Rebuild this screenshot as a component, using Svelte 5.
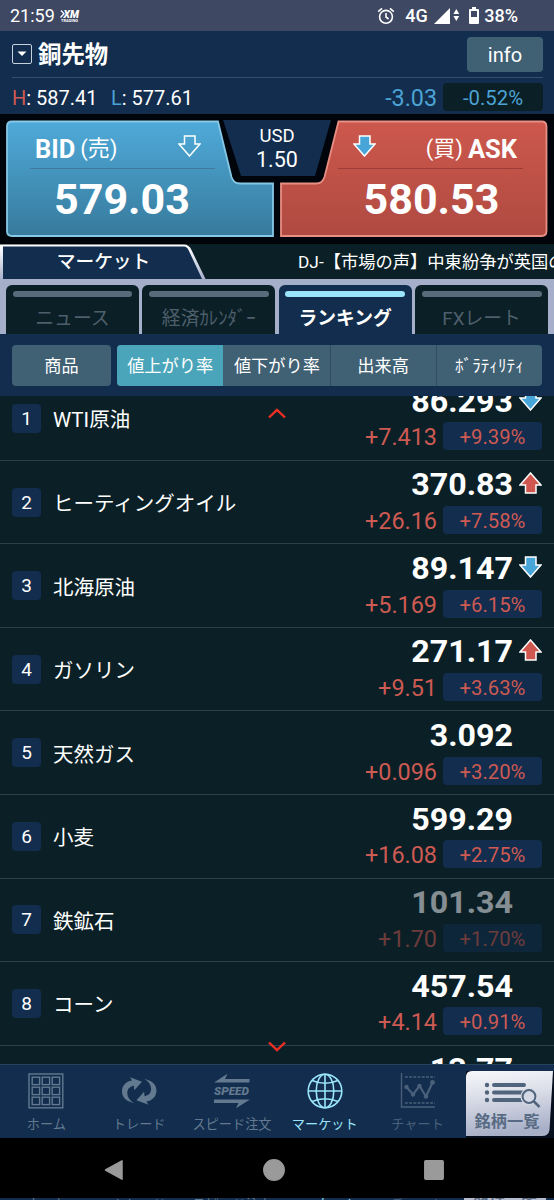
<script lang="ts">
  type Dir = "up" | "down" | "hollow" | "none";

  type Quote = {
    rank: number;
    name: string;
    price: string;
    diff: string;
    rate: string;
    dir: Dir;
    closed?: boolean;
  };

  const quotes: Quote[] = [
    { rank: 1, name: "WTI原油", price: "86.293", diff: "+7.413", rate: "+9.39%", dir: "down" },
    { rank: 2, name: "ヒーティングオイル", price: "370.83", diff: "+26.16", rate: "+7.58%", dir: "up" },
    { rank: 3, name: "北海原油", price: "89.147", diff: "+5.169", rate: "+6.15%", dir: "down" },
    { rank: 4, name: "ガソリン", price: "271.17", diff: "+9.51", rate: "+3.63%", dir: "up" },
    { rank: 5, name: "天然ガス", price: "3.092", diff: "+0.096", rate: "+3.20%", dir: "none" },
    { rank: 6, name: "小麦", price: "599.29", diff: "+16.08", rate: "+2.75%", dir: "none" },
    { rank: 7, name: "鉄鉱石", price: "101.34", diff: "+1.70", rate: "+1.70%", dir: "none", closed: true },
    { rank: 8, name: "コーン", price: "457.54", diff: "+4.14", rate: "+0.91%", dir: "none" }
  ];

  // next row, only its price peeks in above the navigation
  const nextPrice = "13.77";

  const tabs = ["ニュース", "経済ｶﾚﾝﾀﾞｰ", "ランキング", "FXレート"];
  const sorts = ["値上がり率", "値下がり率", "出来高", "ﾎﾞﾗﾃｨﾘﾃｨ"];
  const navItems = ["ホーム", "トレード", "スピード注文", "マーケット", "チャート"];

  let activeTab = $state(2);
  let activeSort = $state(0);
  let activeNav = $state(3);

  const gridCells = [4.2, 14.2, 24.2];
  const loopPath =
    "M13 30 C5 28.5 1 24 1 18.5 C1 13.5 3.5 10 8.5 8 L11 7.5 L9 4.3 L21 8.7 L13.3 17.3 L12.8 12.8 C8.5 13.5 6.3 16.5 6.3 20 C6.3 24 8.5 27.5 13 30 Z";
</script>

{#snippet arrow(dir: Dir)}
  <svg class="arrow {dir}" width="23" height="22" viewBox="0 0 23 22">
    {#if dir === "up"}
      <path d="M11.5 1 L22 13 H17 V21 H6.5 V13 H1 Z" />
    {:else if dir !== "none"}
      <path d="M6.5 1 H17 V9 H22 L11.5 21 L1 9 H6.5 Z" />
    {/if}
  </svg>
{/snippet}

<div class="screen">
  <div class="status">
    <span class="time">21:59</span>
    <svg class="xm" width="21" height="14" viewBox="0 0 21 14">
      <path d="M1 1.5 L4 4.8 L0.5 8.5" fill="none" stroke="#fff" stroke-width="1.3" />
      <text x="3.5" y="8.8" textLength="15.5" lengthAdjust="spacingAndGlyphs" class="xmBig">XM</text>
      <text x="1" y="12.8" textLength="17" lengthAdjust="spacingAndGlyphs" class="xmSmall">TRADING</text>
    </svg>
    <svg class="alarm" width="18" height="18" viewBox="0 0 18 18" fill="none" stroke="#fff" stroke-width="1.6">
      <circle cx="9" cy="9.8" r="6.4" />
      <path d="M9 6 V10 L11.6 12 M1.2 4.6 L5 1.3 M16.8 4.6 L13 1.3" />
    </svg>
    <span class="net">4G</span>
    <svg class="signal" width="27" height="16" viewBox="0 0 27 16" fill="#fff">
      <path d="M0 16 L16 0 V16 Z" />
      <path d="M22.3 1 L25.2 6 H19.4 Z M22.3 13 L25.2 8 H19.4 Z" />
    </svg>
    <svg class="battery" width="10" height="17" viewBox="0 0 10 17">
      <path d="M3 0 H7 V2 H9 Q10 2 10 3 V16 Q10 17 9 17 H1 Q0 17 0 16 V3 Q0 2 1 2 H3 Z" fill="#fff" />
      <path d="M2 4 H8 V10 H2 Z" fill="#3e4862" />
    </svg>
    <span class="pct">38%</span>
  </div>

  <header class="head">
    <div class="titleRow">
      <span class="picker">
        <svg width="10" height="6" viewBox="0 0 10 6"><path d="M0.5 0.5 H9.5 L5 5 Z" fill="#fff" /></svg>
      </span>
      <h1>銅先物</h1>
      <button class="info">info</button>
    </div>
    <div class="hlRow">
      <span class="high"><b>H</b>: 587.41</span>
      <span class="low"><b>L</b>: 577.61</span>
      <span class="change">-3.03</span>
      <span class="changeRate">-0.52%</span>
    </div>
  </header>

  <section class="deal">
    <svg class="dealShape" width="554" height="130" viewBox="0 0 554 130">
      <defs>
        <linearGradient id="bidFill" x1="0" y1="0" x2="0" y2="1">
          <stop offset="0" stop-color="#4faad9" />
          <stop offset="1" stop-color="#377a9c" />
        </linearGradient>
        <linearGradient id="askFill" x1="0" y1="0" x2="0" y2="1">
          <stop offset="0" stop-color="#cd584d" />
          <stop offset="1" stop-color="#af4a41" />
        </linearGradient>
      </defs>
      <path d="M223 6 H331 L315 62 H241 Z" fill="#122d4d" />
      <path
        d="M12 7.5 H218 L231.5 63 Q233.5 69.5 240 69.5 H273 V122 H12 Q7 122 7 117 V12.5 Q7 7.5 12 7.5 Z"
        fill="url(#bidFill)" stroke="#86c8e6" stroke-width="1.8"
      />
      <path
        d="M338.5 7.5 H541.5 Q546.5 7.5 546.5 12.5 V117 Q546.5 122 541.5 122 H281 V69.5 H316 Q322.5 69.5 324.5 63 Z"
        fill="url(#askFill)" stroke="#e78f84" stroke-width="1.8"
      />
    </svg>
    <div class="side bid">
      <div class="sideHead"><strong>BID</strong><span>(売)</span>{@render arrow("hollow")}</div>
      <div class="sidePrice">579.03</div>
    </div>
    <div class="spread"><span>USD</span><span class="spreadVal">1.50</span></div>
    <div class="side ask">
      <div class="sideHead">{@render arrow("down")}<span>(買)</span><strong>ASK</strong></div>
      <div class="sidePrice">580.53</div>
    </div>
  </section>

  <div class="ticker">
    <svg class="tickerShape" width="210" height="36" viewBox="0 0 210 36">
      <defs>
        <linearGradient id="edge" x1="0" y1="0" x2="0" y2="1">
          <stop offset="0" stop-color="#fff" />
          <stop offset="0.2" stop-color="#f2f4fa" />
          <stop offset="1" stop-color="#a5afc9" />
        </linearGradient>
      </defs>
      <path d="M0 0.5 H184 Q189 0.5 191.5 6 L206 36 H0 Z" fill="url(#edge)" />
      <path d="M3 2.5 H184 Q187 2.5 188.5 6 L202.5 36 H3 Z" fill="#122d4d" />
    </svg>
    <span class="section">マーケット</span>
    <span class="headline">DJ-【市場の声】中東紛争が英国の</span>
  </div>

  <nav class="tabs">
    {#each tabs as tab, i}
      <button class="tab" class:active={activeTab === i} onclick={() => (activeTab = i)}>
        <i class="bar"></i>
        <span>{tab}</span>
      </button>
    {/each}
  </nav>

  <div class="filters">
    <button class="goods">商品</button>
    <div class="sorts">
      {#each sorts as sort, i}
        <button class:active={activeSort === i} onclick={() => (activeSort = i)}>{sort}</button>
      {/each}
    </div>
  </div>

  <main class="listBox">
    <div class="list">
      {#each quotes as q (q.rank)}
        <div class="row" class:closed={q.closed}>
          <span class="rank">{q.rank}</span>
          <span class="name">{q.name}</span>
          <div class="nums">
            <div class="priceLine"><span>{q.price}</span>{@render arrow(q.dir)}</div>
            <div class="diffLine"><span class="diff">{q.diff}</span><span class="rate">{q.rate}</span></div>
          </div>
        </div>
      {/each}
      <div class="row">
        <div class="nums">
          <div class="priceLine"><span>{nextPrice}</span>{@render arrow("none")}</div>
        </div>
      </div>
    </div>
    <svg class="more top" width="18" height="11" viewBox="0 0 18 11"><path d="M1 9.5 L9 1.8 L17 9.5" /></svg>
    <svg class="more bottom" width="18" height="11" viewBox="0 0 18 11"><path d="M1 1.5 L9 9.2 L17 1.5" /></svg>
  </main>

  <footer class="nav">
    {#each navItems as item, i}
      <button class="navItem" class:active={activeNav === i} class:dim={i === 4} onclick={() => (activeNav = i)}>
        <svg width="36" height="36" viewBox="0 0 36 36" fill="none" stroke="currentColor">
          {#if i === 0}
            <rect x="1" y="1" width="33.8" height="33.8" stroke-width="1.4" />
            {#each gridCells as y}
              {#each gridCells as x}
                <rect {x} {y} width="7.4" height="7.4" stroke-width="1.4" />
              {/each}
            {/each}
          {:else if i === 1}
            <g fill="currentColor" stroke="none">
              <path d={loopPath} />
              <path d={loopPath} transform="rotate(180 18.2 18)" />
            </g>
          {:else if i === 2}
            <g fill="currentColor" stroke="none">
              <path d="M0 9.5 L13.5 0.8 L11 6 H35.5 V9.5 Z" />
              <path d="M36 26.5 L22 35.2 L24.5 30 H0 V26.5 Z" />
              <text x="0" y="22" textLength="35" lengthAdjust="spacingAndGlyphs" class="speed">SPEED</text>
            </g>
          {:else if i === 3}
            <g stroke-width="1.6">
              <circle cx="18" cy="18" r="16.8" />
              <ellipse cx="18" cy="18" rx="8.8" ry="16.8" />
              <path d="M18 1.2 V34.8 M1.2 18 H34.8 M5 7.5 Q18 13 31 7.5 M5 28.5 Q18 23 31 28.5" />
            </g>
          {:else}
            <path d="M1.5 0 V34 H35" stroke-width="1.4" />
            <path d="M5 4 H35 M5 30 H35" stroke-width="1.4" stroke-dasharray="2.8 1.4" />
            <path d="M6.5 14 L13 21.5 L19.5 13 L26 23.5 L32.5 9.5" stroke-width="2.2" />
            <g fill="currentColor" stroke="none">
              <circle cx="6.5" cy="14" r="2.2" /><circle cx="13" cy="21.5" r="2.2" />
              <circle cx="19.5" cy="13" r="2.2" /><circle cx="26" cy="23.5" r="2.2" />
              <circle cx="32.5" cy="9.5" r="2.4" />
            </g>
          {/if}
        </svg>
        <span>{item}</span>
      </button>
    {/each}
    <button class="symbols">
      <svg class="symbolsShape" width="90" height="74" viewBox="0 0 90 74">
        <defs>
          <linearGradient id="silver" x1="0" y1="0" x2="0.15" y2="1">
            <stop offset="0" stop-color="#f7f8fb" />
            <stop offset="0.4" stop-color="#dcdfe9" />
            <stop offset="1" stop-color="#a8b0c8" />
          </linearGradient>
        </defs>
        <path d="M2 7 H90 V74 H2 Z" fill="#050f1d" />
        <path d="M8 7 H89 L85.5 66 Q84.5 72 78 72 H2 V13 Q2 7 8 7 Z" fill="url(#silver)" />
      </svg>
      <svg class="symbolsIcon" width="57" height="27" viewBox="0 0 57 27" fill="none" stroke="#51647e">
        <path d="M10 4 H40 M10 11.5 H40 M10 19 H38" stroke-width="4" stroke-linecap="round" />
        <path d="M3 4 H3.01 M3 11.5 H3.01 M3 19 H3.01" stroke-width="4.4" stroke-linecap="round" />
        <circle cx="45" cy="15.5" r="8.6" fill="#d5d9e5" stroke="none" />
        <circle cx="45" cy="15.5" r="6.4" stroke-width="2" />
        <path d="M49.5 20 L55.5 26" stroke-width="2.5" />
      </svg>
      <span>銘柄一覧</span>
    </button>
  </footer>

  <div class="system">
    <svg width="20" height="22" viewBox="0 0 20 22"><path d="M1.5 11 L18 1.8 V20.2 Z" /></svg>
    <svg width="22" height="22" viewBox="0 0 22 22"><circle cx="11" cy="11" r="10.2" /></svg>
    <svg width="20" height="20" viewBox="0 0 20 20"><rect x="0.8" y="0.8" width="18.4" height="18.4" rx="1" /></svg>
  </div>

  <div class="peek" aria-hidden="true">
    {#each navItems as item, i}
      <span class:active={activeNav === i} class:dim={i === 4}>{item}</span>
    {/each}
    <b>銘柄一覧</b>
  </div>
</div>

<style>
  :global(body) {
    background: #000;
  }

  .screen {
    width: 554px;
    height: 1200px;
    display: flex;
    flex-direction: column;
    overflow: hidden;
    background: #0b1f26;
    color: #fff;
    font-family: Roboto, "Noto Sans CJK JP", sans-serif;
    white-space: nowrap;
  }

  .screen > * {
    flex: none;
    box-sizing: border-box;
  }

  button {
    margin: 0;
    padding: 0;
    border: 0;
    background: none;
    color: inherit;
    font: inherit;
    white-space: nowrap;
  }

  svg {
    display: block;
    flex: none;
  }

  /* status bar */
  .status {
    height: 31px;
    padding: 0 36px 0 10px;
    display: flex;
    align-items: center;
    background: #3e4862;
    font-size: 18px;
    line-height: 31px;
  }
  .time { width: 50px; }
  .xm { margin-top: 1px; }
  .xmBig { fill: #fff; font: italic 900 10.5px Roboto, sans-serif; }
  .xmSmall { fill: #fff; font: 700 4px Roboto, sans-serif; }
  .alarm { margin-left: auto; }
  .net { margin-left: 10px; width: 29px; font-weight: 500; }
  .battery { margin: 0 5px 0 8px; }
  .pct { font-weight: 500; }

  /* instrument header */
  .head {
    height: 83px;
    padding: 0 11px 0 12px;
    background: #122d4d;
  }
  .titleRow {
    height: 47px;
    box-sizing: border-box;
    display: flex;
    align-items: center;
    border-bottom: 1.5px solid #34506f;
  }
  .picker {
    width: 18px;
    height: 18px;
    border: 1px solid #c8d2de;
    border-radius: 2px;
    display: flex;
    align-items: center;
    justify-content: center;
  }
  h1 {
    margin: 0 auto 0 6px;
    padding-top: 2px;
    font-size: 23.4px;
    line-height: 44px;
    font-weight: 700;
  }
  .info {
    width: 76px;
    height: 35px;
    padding-top: 1px;
    border-radius: 4px;
    background: #406074;
    font-size: 20px;
  }
  .hlRow {
    height: 36px;
    display: flex;
    align-items: center;
    font-size: 20px;
    line-height: 36px;
  }
  .hlRow b { font-weight: 400; }
  .high,
  .low,
  .change { padding-top: 3px; }
  .high { width: 99px; }
  .high b { color: #cf5a52; }
  .low b { color: #4ba3d3; }
  .change {
    margin-left: auto;
    margin-right: 6px;
    font-size: 23.3px;
    color: #4ba3d3;
  }
  .changeRate {
    width: 100px;
    height: 28px;
    margin-top: 1px;
    border-radius: 4px;
    background: #0b1f26;
    color: #4ba3d3;
    font-size: 20.3px;
    line-height: 30px;
    text-align: center;
  }

  /* bid / ask */
  .deal {
    position: relative;
    height: 129px;
    display: grid;
    grid-template-columns: 217px 120px 217px;
    background: #00040b;
  }
  .dealShape {
    position: absolute;
    inset: 0;
  }
  .side {
    position: relative;
    padding-top: 15px;
  }
  .bid { padding-left: 30px; padding-right: 2px; }
  .ask { padding-left: 1px; padding-right: 31px; }
  .sideHead {
    height: 40px;
    box-sizing: border-box;
    padding: 0 6px 0 5px;
    display: flex;
    align-items: center;
    border-bottom: 1.5px solid rgba(60, 30, 50, 0.25);
    line-height: 40px;
    font-size: 22px;
  }
  .sideHead strong { font-size: 25.5px; }
  .bid .sideHead span { margin-left: 5px; }
  .bid .sideHead :global(.arrow) { margin: -5px 8px 0 auto; }
  .ask .sideHead { border-color: rgba(90, 20, 30, 0.35); }
  .ask .sideHead :global(.arrow) { margin: -5px auto 0 10px; }
  .ask .sideHead strong { margin-left: 5px; }
  .sidePrice {
    font-size: 43px;
    line-height: 61px;
    font-weight: 700;
    text-align: center;
  }
  .ask .sidePrice { padding-left: 2px; }
  .bid .sidePrice { padding-right: 1px; }
  .spread {
    position: relative;
    display: flex;
    flex-direction: column;
    align-items: center;
    padding-top: 10px;
    font-size: 18.5px;
    line-height: 24px;
  }
  .spreadVal { font-size: 21.5px; }

  .arrow path {
    stroke: #fff;
    stroke-width: 1.5;
    fill: none;
  }
  .arrow.up path { fill: #d0574f; }
  .arrow.down path { fill: #48a5d8; }

  /* ticker */
  .ticker {
    position: relative;
    height: 36px;
    display: flex;
    overflow: hidden;
    border-top: 1px solid #000;
    line-height: 37px;
  }
  .tickerShape {
    position: absolute;
    left: 0;
    top: 0;
  }
  .section {
    position: relative;
    width: 207px;
    flex: none;
    text-align: center;
    font-size: 18.7px;
    font-weight: 500;
  }
  .headline {
    margin-left: 91px;
    font-size: 17.3px;
  }

  /* tabs */
  .tabs {
    height: 55px;
    padding: 5.5px 6px 0;
    display: grid;
    grid-template-columns: repeat(4, 1fr);
    gap: 3.5px;
    background: #a5afc9;
  }
  .tab {
    display: flex;
    flex-direction: column;
    align-items: center;
    padding: 6.5px 6.5px 0;
    border-radius: 6px 6px 0 0;
    background: #0b1f26;
    color: #4e5f6c;
    font-size: 18.8px;
    line-height: 34px;
  }
  .tab span { padding-top: 5px; }
  .bar {
    width: 100%;
    height: 5.5px;
    border-radius: 3px;
    background: #586b7b;
  }
  .tab.active {
    background: #122d4d;
    color: #fff;
    font-weight: 700;
  }
  .tab.active .bar { background: #99e3fb; }

  /* ranking filters */
  .filters {
    height: 62px;
    padding: 11px 12px 10px;
    display: flex;
    gap: 6px;
    background: #122d4d;
    font-size: 17.2px;
    line-height: 41px;
  }
  .filters button { padding-top: 1px; }
  .goods {
    width: 99px;
    border-radius: 4px;
    background: #406074;
  }
  .sorts {
    flex: 1;
    display: grid;
    grid-template-columns: repeat(4, 1fr);
    border-radius: 4px;
    overflow: hidden;
    background: #406074;
  }
  .sorts button + button { border-left: 1px solid #2f4d63; }
  .sorts button.active { background: #4ba5ba; }
  .sorts button.active + button { border-left-color: #406074; }

  /* list */
  .listBox {
    position: relative;
    height: 668px;
    overflow: hidden;
  }
  .list { margin-top: -18.8px; }
  .row {
    height: 83.57px;
    box-sizing: border-box;
    padding: 0 12px;
    display: flex;
    align-items: center;
    border-bottom: 1.5px solid #2c424a;
  }
  .rank {
    width: 29px;
    height: 29px;
    border-radius: 4px;
    background: #122d4d;
    text-align: center;
    font-size: 19px;
    line-height: 30px;
  }
  .name {
    margin-left: 12px;
    font-size: 20.5px;
  }
  .nums {
    margin-left: auto;
    align-self: flex-start;
    padding-top: 4.6px;
  }
  .priceLine {
    display: flex;
    justify-content: flex-end;
    gap: 6px;
    font-size: 32.2px;
    line-height: 38px;
    font-weight: 700;
  }
  .priceLine :global(.arrow) { margin-top: 7px; }
  .diffLine {
    display: flex;
    justify-content: flex-end;
    align-items: center;
    gap: 6px;
    margin-top: 1.6px;
    color: #cd5a53;
  }
  .diff {
    padding-top: 2px;
    font-size: 23.4px;
    line-height: 28px;
  }
  .rate {
    width: 99px;
    height: 28px;
    border-radius: 4px;
    background: #122d4d;
    font-size: 20.3px;
    line-height: 30px;
    text-align: center;
  }
  .closed .nums { opacity: 0.5; }

  .more {
    position: absolute;
    left: 268px;
  }
  .more.top { top: 12px; }
  .more.bottom { top: 645px; }
  .more path {
    fill: none;
    stroke: #ee2f24;
    stroke-width: 2.4;
  }

  /* app navigation */
  .nav {
    height: 74px;
    display: grid;
    grid-template-columns: repeat(5, 92.8px) 90px;
    background: #122d4d;
    border-top: 1px solid #27425c;
  }
  .navItem {
    display: flex;
    flex-direction: column;
    align-items: center;
    padding-top: 8px;
    color: #62798f;
    font-size: 13.2px;
    line-height: 20px;
  }
  .navItem span { margin-top: 6px; }
  .navItem.active { color: #9ae5fb; }
  .navItem.dim { color: #4a607a; }
  .speed {
    font: italic 900 10.5px Roboto, sans-serif;
  }
  .symbols {
    position: relative;
    display: flex;
    flex-direction: column;
    align-items: center;
    padding-top: 16px;
    color: #586b84;
    font-size: 16.2px;
    font-weight: 700;
    line-height: 24px;
  }
  .symbolsShape {
    position: absolute;
    left: 0;
    top: -1px;
  }
  .symbolsIcon { position: relative; margin-left: 8px; }
  .symbols span { position: relative; margin: 2px 4px 0 0; }

  /* system navigation */
  .system {
    height: 60px;
    display: flex;
    justify-content: space-between;
    align-items: center;
    padding: 4px 110px 0 104px;
    background: #000;
  }
  .system svg {
    fill: #9a9a9a;
    stroke: #9a9a9a;
    stroke-width: 1.5;
    stroke-linejoin: round;
  }

  .peek {
    height: 2px;
    display: grid;
    grid-template-columns: repeat(5, 92.8px) 82px;
    overflow: hidden;
    background: #122d4d;
    color: #62798f;
    font-size: 13.2px;
    line-height: 14px;
    text-align: center;
  }
  .peek .active { color: #9ae5fb; }
  .peek .dim { color: #4a607a; }
  .peek b {
    background: #b4bbcf;
    color: #586b84;
    font-size: 16px;
  }
</style>
